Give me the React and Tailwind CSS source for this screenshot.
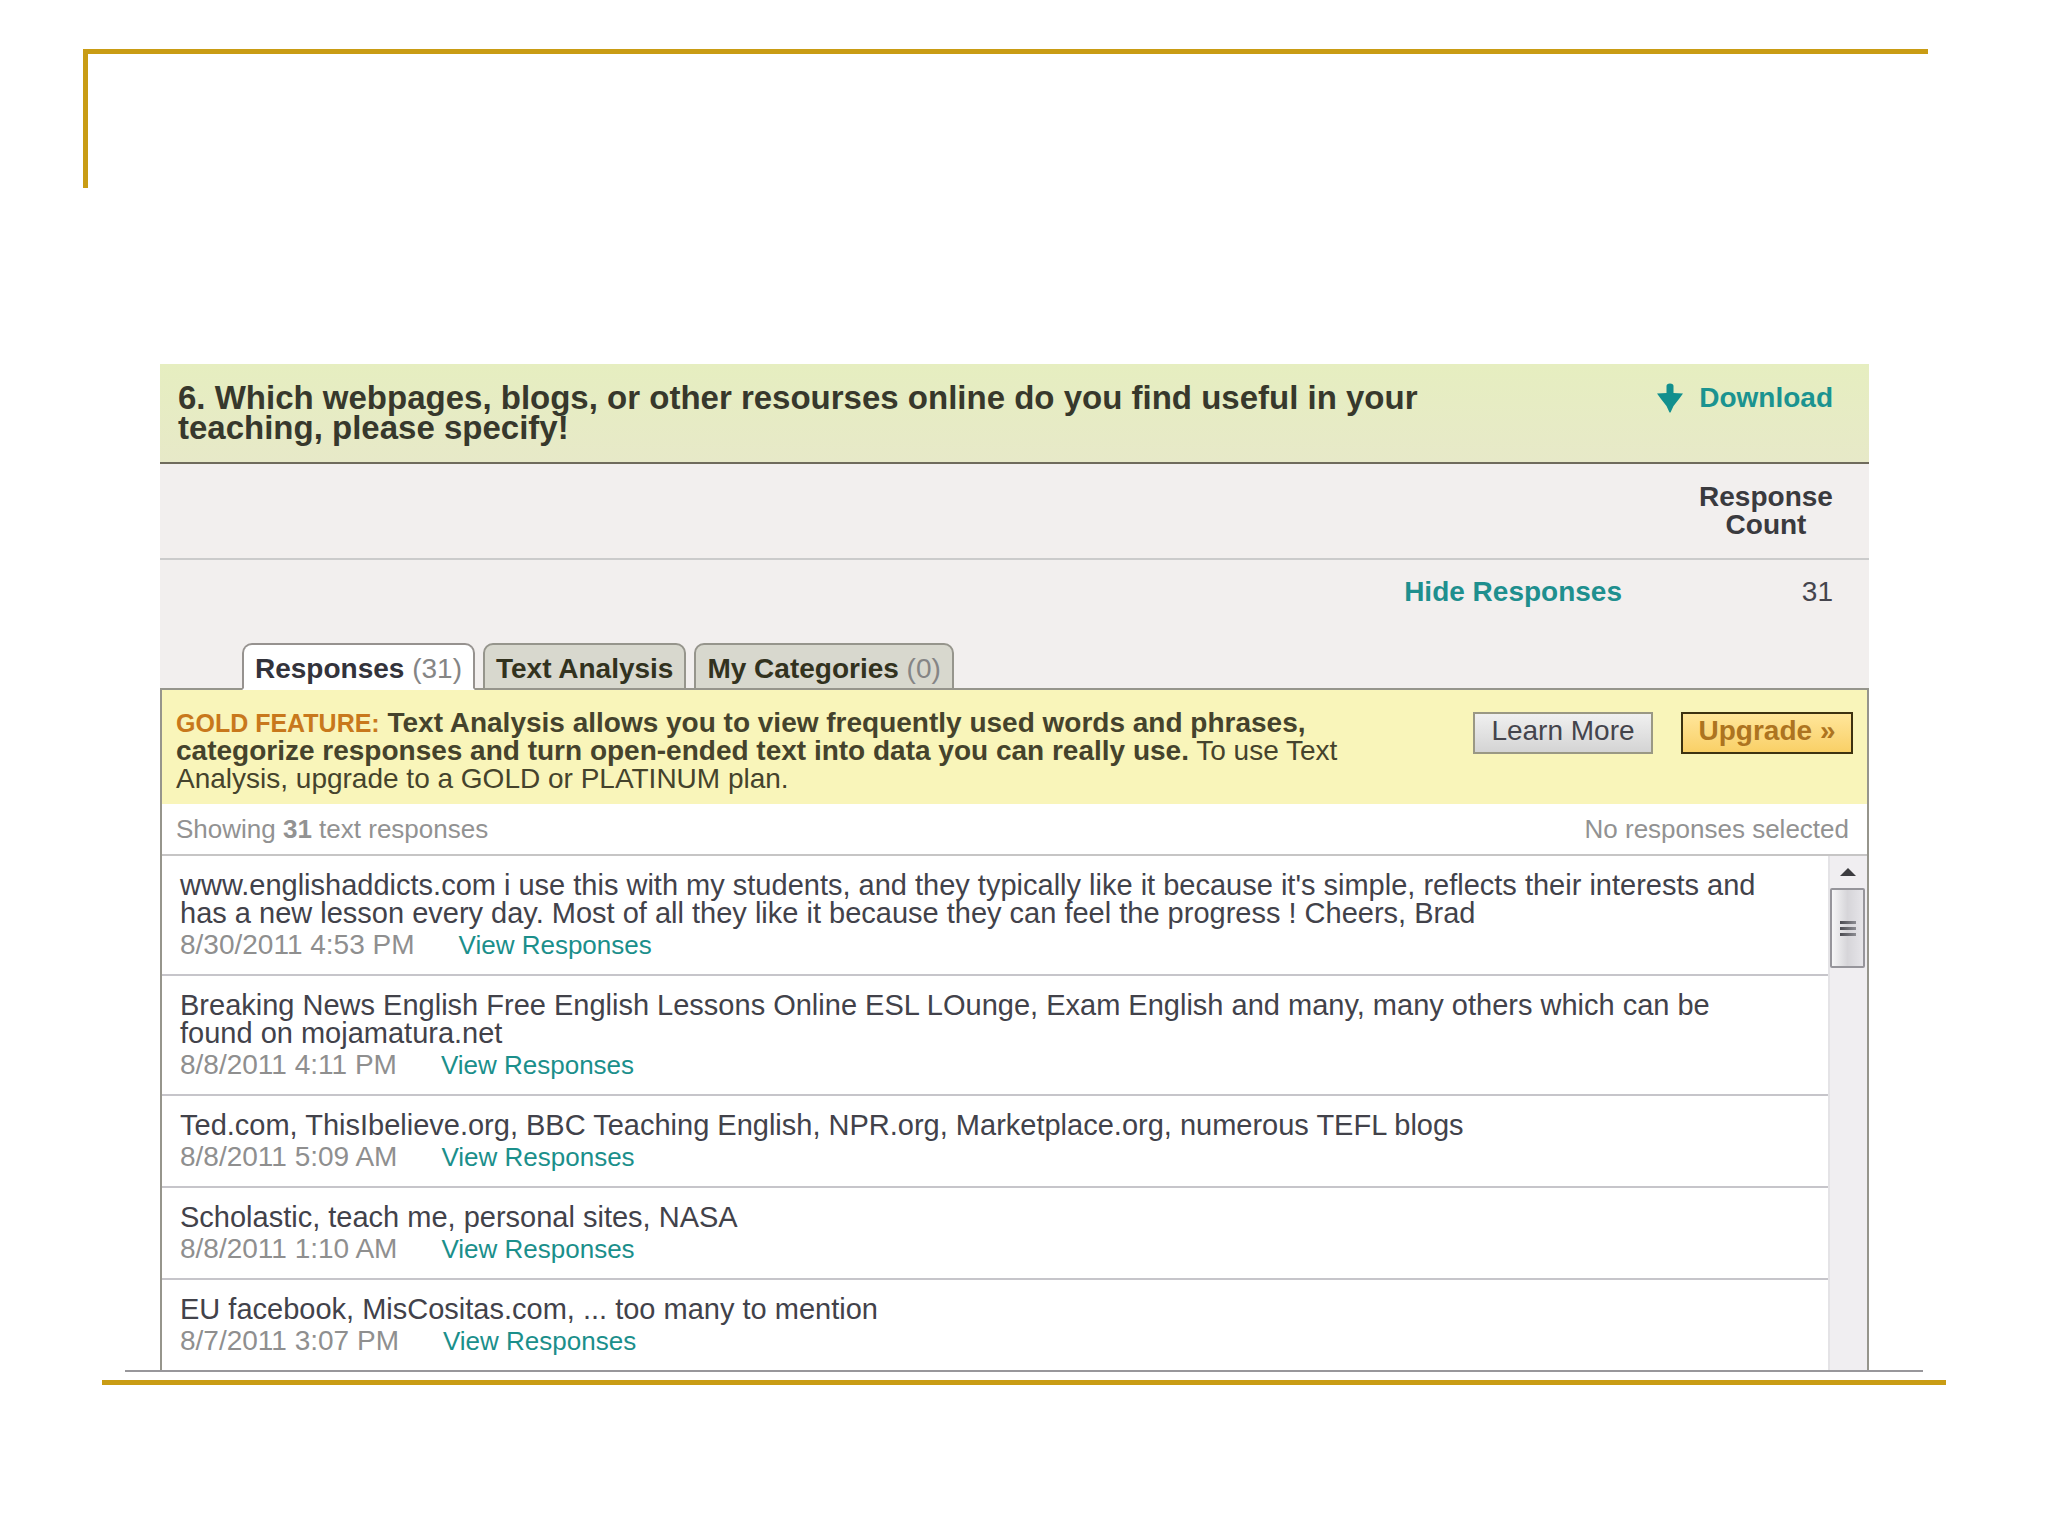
import { useState } from "react";

const responses = [
  {
    text: "www.englishaddicts.com i use this with my students, and they typically like it because it's simple, reflects their interests and has a new lesson every day. Most of all they like it because they can feel the progress ! Cheers, Brad",
    date: "8/30/2011 4:53 PM",
  },
  {
    text: "Breaking News English Free English Lessons Online ESL LOunge, Exam English and many, many others which can be found on mojamatura.net",
    date: "8/8/2011 4:11 PM",
  },
  {
    text: "Ted.com, ThisIbelieve.org, BBC Teaching English, NPR.org, Marketplace.org, numerous TEFL blogs",
    date: "8/8/2011 5:09 AM",
  },
  { text: "Scholastic, teach me, personal sites, NASA", date: "8/8/2011 1:10 AM" },
  { text: "EU facebook, MisCositas.com, ... too many to mention", date: "8/7/2011 3:07 PM" },
];

const tabs = [
  { id: "responses", label: "Responses", count: 31 },
  { id: "analysis", label: "Text Analysis" },
  { id: "categories", label: "My Categories", count: 0 },
];

function DownArrow() {
  return (
    <svg viewBox="0 0 26 30" className="w-[26px] h-[30px]" fill="#12908e" aria-hidden="true">
      <path d="M9.5 3 Q9.5 0.5 13 0.5 Q16.5 0.5 16.5 3 V10 L26 10.5 L22 16 L16.5 23 L13.5 29.5 H12.5 L9.5 23 L4 16 L0 10.5 L9.5 10 Z" />
    </svg>
  );
}

function QuestionHeader() {
  return (
    <div className="flex items-start justify-between border-b-2 border-[#6f6b5c] bg-gradient-to-b from-[#e6eec0] to-[#e7e9c8] pt-[19px] pb-[19px] pl-[18px] pr-9">
      <h1 className="max-w-[1340px] text-[33px] leading-[30px] font-bold text-[#37382c]">
        6. Which webpages, blogs, or other resourses online do you find useful in your teaching, please specify!
      </h1>
      <a href="#download" className="flex items-center gap-4 text-[28px] leading-7 font-bold text-[#1b9390]">
        <DownArrow />
        Download
      </a>
    </div>
  );
}

function Tabs({ active, onSelect }) {
  return (
    <div role="tablist" className="relative -mb-[2px] flex gap-2 pl-[82px]">
      {tabs.map((tab) => (
        <button
          key={tab.id}
          role="tab"
          aria-selected={tab.id === active}
          onClick={() => onSelect(tab.id)}
          className={`h-[47px] rounded-t-[10px] border-2 px-[11px] pt-1 text-[28px] leading-7 font-bold ${
            tab.id === active
              ? "border-[#96928f] border-b-white bg-white text-[#33333b]"
              : "border-[#96958c] bg-[#d8d8ce] text-[#32321e]"
          }`}
        >
          {tab.label}
          {tab.count !== undefined && <span className="font-normal text-[#858585]"> ({tab.count})</span>}
        </button>
      ))}
    </div>
  );
}

function GoldFeature() {
  return (
    <div className="flex items-start justify-between bg-[#f9f5ba] pt-[19px] pb-[11px] pl-[14px] pr-[14px]">
      <p className="max-w-[1230px] text-[28px] leading-7 text-[#45432c]">
        <strong className="text-[25px] text-[#c8781c]">GOLD FEATURE:</strong>{" "}
        <strong>
          Text Analysis allows you to view frequently used words and phrases, categorize responses and turn
          open-ended text into data you can really use.
        </strong>{" "}
        To use Text Analysis, upgrade to a GOLD or PLATINUM plan.
      </p>
      <div className="mt-[3px] flex gap-7">
        <button className="h-[42px] w-[180px] border-2 border-[#9a9884] bg-gradient-to-b from-[#f0f0f0] to-[#d4d4d4] pb-1 text-[28px] leading-7 text-[#44444c]">
          Learn More
        </button>
        <button className="h-[42px] w-[172px] border-2 border-[#3d3210] bg-gradient-to-b from-[#ffe69a] to-[#f9d066] pb-1 text-[28px] leading-7 font-bold text-[#ad7420]">
          Upgrade »
        </button>
      </div>
    </div>
  );
}

function ResponseRow({ text, date }) {
  return (
    <li className="border-b-2 border-[#c6c5ca] pt-[15px] pb-[15px] pl-[18px] pr-6 last:border-b-0">
      <p className="max-w-[1604px] text-[29px] leading-7 text-[#42424a]">{text}</p>
      <div className="mt-1 flex gap-11 leading-7">
        <span className="text-[28px] text-[#8f8f8f]">{date}</span>
        <a href="#view" className="text-[26px] text-[#1b8f8b]">
          View Responses
        </a>
      </div>
    </li>
  );
}

function Scrollbar() {
  return (
    <div className="flex w-[39px] flex-col border-l-2 border-[#e4e3e6] bg-[#f0eef1] pr-[2px]">
      <button aria-label="Scroll up" className="flex h-8 items-center justify-center">
        <svg viewBox="0 0 16 8" className="w-4 h-2" aria-hidden="true">
          <path d="M8 0 L16 8 H0 Z" fill="#3c3c40" />
        </svg>
      </button>
      <button
        aria-label="Scroll position"
        className="flex h-20 flex-col items-center justify-center gap-[3px] rounded-[2px] border-2 border-[#96959b] bg-gradient-to-r from-[#f6f6f7] via-[#d6d5d9] to-[#e6e5e9]"
      >
        <span className="h-[3px] w-4 bg-gradient-to-r from-[#4c4c52] to-[#8c8c92]" />
        <span className="h-[3px] w-4 bg-gradient-to-r from-[#4c4c52] to-[#8c8c92]" />
        <span className="h-[3px] w-4 bg-gradient-to-r from-[#4c4c52] to-[#8c8c92]" />
      </button>
    </div>
  );
}

export default function App() {
  const [active, setActive] = useState("responses");

  return (
    <div className="min-h-screen bg-white pt-[49px] font-['Liberation_Sans',Arial,sans-serif]">
      <div className="ml-[83px] mr-[120px] h-[139px] border-t-[5px] border-[#c99c14]">
        <div className="h-full w-[5px] bg-[#c99c14]" />
      </div>

      <main className="ml-[160px] mr-[179px] mt-44">
        <QuestionHeader />

        <section className="bg-[#f2efee]">
          <div className="flex justify-end border-b-2 border-[#cbcbcb] py-[19px] pr-9">
            <div className="w-[134px] text-center text-[28px] leading-7 font-bold text-[#3a3a3e]">Response Count</div>
          </div>
          <div className="flex h-[83px] items-start justify-end pt-[18px] pr-9 text-[28px] leading-7">
            <a href="#hide" className="font-bold text-[#1f8f8e]">
              Hide Responses
            </a>
            <span className="w-[211px] text-right text-[#45454d]">31</span>
          </div>
          <Tabs active={active} onSelect={setActive} />
        </section>

        <section className="border-x-2 border-t-2 border-[#96958c]">
          <GoldFeature />
          <div className="flex justify-between border-b-2 border-[#c6c5c5] pt-[11px] pb-[11px] pl-[14px] pr-[18px] text-[26px] leading-7 text-[#929292]">
            <span>
              Showing <b>31</b> text responses
            </span>
            <span>No responses selected</span>
          </div>
          <div className="flex">
            <ul className="flex-1">
              {responses.map((r) => (
                <ResponseRow key={r.date} text={r.text} date={r.date} />
              ))}
            </ul>
            <Scrollbar />
          </div>
        </section>
      </main>

      <div className="ml-[125px] mr-[125px] h-[2px] bg-[#98979b]" />
      <div className="ml-[102px] mr-[102px] mt-2 h-[5px] bg-[#c99c14]" />
    </div>
  );
}
